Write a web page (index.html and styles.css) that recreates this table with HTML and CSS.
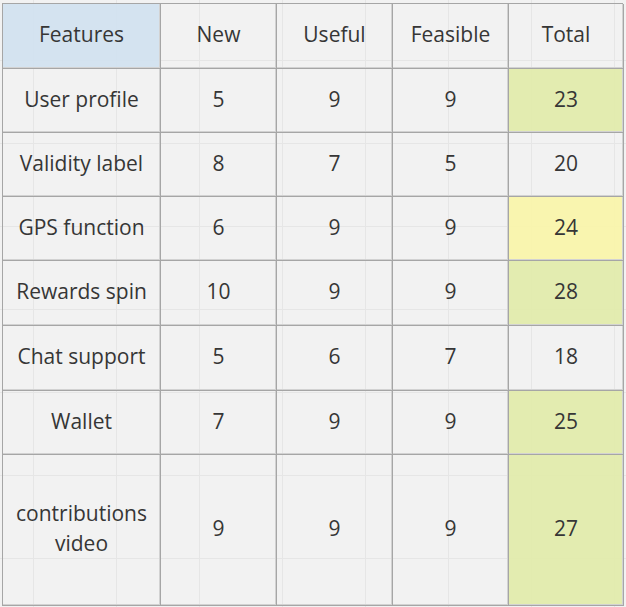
FILE: index.html
```html
<!DOCTYPE html>
<html>
<head>
<meta charset="utf-8">
<link rel="stylesheet" href="styles.css">
</head>
<body>
<div class="table">
  <div class="cell head feat">Features</div>
  <div class="cell head">New</div>
  <div class="cell head">Useful</div>
  <div class="cell head">Feasible</div>
  <div class="cell head">Total</div>

  <div class="cell">User profile</div>
  <div class="cell">5</div>
  <div class="cell">9</div>
  <div class="cell">9</div>
  <div class="cell green">23</div>

  <div class="cell">Validity label</div>
  <div class="cell">8</div>
  <div class="cell">7</div>
  <div class="cell">5</div>
  <div class="cell">20</div>

  <div class="cell">GPS function</div>
  <div class="cell">6</div>
  <div class="cell">9</div>
  <div class="cell">9</div>
  <div class="cell yellow">24</div>

  <div class="cell">Rewards spin</div>
  <div class="cell">10</div>
  <div class="cell">9</div>
  <div class="cell">9</div>
  <div class="cell green">28</div>

  <div class="cell">Chat support</div>
  <div class="cell">5</div>
  <div class="cell">6</div>
  <div class="cell">7</div>
  <div class="cell">18</div>

  <div class="cell">Wallet</div>
  <div class="cell">7</div>
  <div class="cell">9</div>
  <div class="cell">9</div>
  <div class="cell green">25</div>

  <div class="cell">contributions<br>video</div>
  <div class="cell">9</div>
  <div class="cell">9</div>
  <div class="cell">9</div>
  <div class="cell green">27</div>
</div>
</body>
</html>
```
FILE: styles.css
```css
html, body {
  margin: 0;
  padding: 0;
}
body {
  width: 626px;
  height: 607px;
  overflow: hidden;
  background-color: #f2f2f2;
  background-image:
    linear-gradient(to right, #e6e6e6 1px, transparent 1px),
    linear-gradient(to bottom, #e6e6e6 1px, transparent 1px);
  background-size: 83px 83px;
  background-position: 33px 60px;
  font-family: "Open Sans", "Liberation Sans", sans-serif;
  color: #363636;
}
.table {
  margin: 3px 0 0 2px;
  display: grid;
  grid-template-columns: 158px 116px 116px 116px 115px;
  grid-template-rows: 65px 64px 64px 64px 65px 65px 64px 151px;
  border-left: 1px solid #a6a6a6;
  border-top: 1px solid #a6a6a6;
  width: 621px;
  box-sizing: border-box;
}
.cell {
  display: flex;
  align-items: center;
  justify-content: center;
  text-align: center;
  font-size: 21px;
  line-height: 30px;
  padding-bottom: 4px;
  box-sizing: border-box;
  border-right: 1px solid #a6a6a6;
  border-bottom: 1px solid #a6a6a6;
  box-shadow: inset -1px -1px 0 #d2d2d2;
}
.feat {
  background: rgba(207, 225, 240, 0.85);
}
.green {
  background: rgba(225, 235, 168, 0.9);
}
.yellow {
  background: rgba(250, 245, 167, 0.9);
}
```
